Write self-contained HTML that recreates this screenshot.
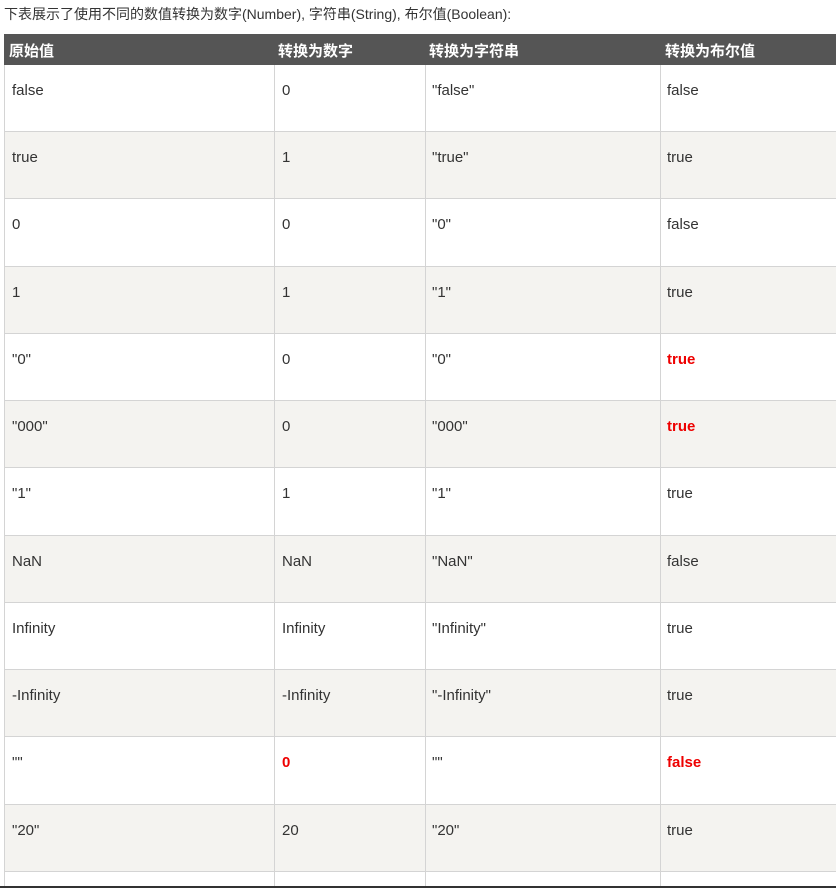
<!DOCTYPE html>
<html><head><meta charset="utf-8"><style>
html,body{margin:0;background:#fff;width:836px;height:888px;overflow:hidden;}
body{position:relative;font-family:"Liberation Sans","Noto Sans CJK SC",sans-serif;color:#333;}
.cap{position:absolute;left:4px;top:4px;font-size:14px;color:#333;}
.hd{position:absolute;left:4px;top:34px;width:840px;height:31px;background:#555;}
.hd span{position:absolute;top:6px;color:#fff;font-weight:bold;font-size:15px;}
.row{position:absolute;left:4px;width:840px;border-top:1px solid #d4d4d4;border-left:1px solid #d4d4d4;box-sizing:border-box;}
.row.first{border-top:none;}
.row.alt{background:#f4f3f0;}
.row span{position:absolute;top:17px;font-size:15px;}
.first span{top:17px;}
.v{position:absolute;top:0;bottom:0;width:1px;background:#d4d4d4;}
.r{color:#e00;font-weight:bold;}
.bot{position:absolute;left:0;top:886px;width:836px;height:2px;background:#333;}
</style></head><body>
<div class="cap">下表展示了使用不同的数值转换为数字(Number), 字符串(String), 布尔值(Boolean):</div>
<div class="hd"><span style="left:5px">原始值</span><span style="left:274px">转换为数字</span><span style="left:425px">转换为字符串</span><span style="left:661px">转换为布尔值</span></div>
<div id="rows"></div>
<script>
var d=[["false","0","\"false\"","false"],["true","1","\"true\"","true"],["0","0","\"0\"","false"],["1","1","\"1\"","true"],["\"0\"","0","\"0\"","<b class=r>true</b>"],["\"000\"","0","\"000\"","<b class=r>true</b>"],["\"1\"","1","\"1\"","true"],["NaN","NaN","\"NaN\"","false"],["Infinity","Infinity","\"Infinity\"","true"],["-Infinity","-Infinity","\"-Infinity\"","true"],["\"\"","<b class=r>0</b>","\"\"","<b class=r>false</b>"],["\"20\"","20","\"20\"","true"],["","","",""]];
var tops=[65,131,198,266,333,400,467,535,602,669,736,804,871,886];
var h="";
for(var i=0;i<d.length;i++){var t=tops[i],b=tops[i+1];
h+='<div class="row'+(i%2?' alt':'')+(i==0?' first':'')+'" style="top:'+t+'px;height:'+(b-t)+'px">';
h+='<div class="v" style="left:269px"></div><div class="v" style="left:420px"></div><div class="v" style="left:655px"></div>';
h+='<span style="left:7px">'+d[i][0]+'</span><span style="left:277px">'+d[i][1]+'</span><span style="left:427px">'+d[i][2]+'</span><span style="left:662px">'+d[i][3]+'</span></div>';}
document.getElementById('rows').innerHTML=h;
</script>
<div class="bot"></div>
</body></html>
